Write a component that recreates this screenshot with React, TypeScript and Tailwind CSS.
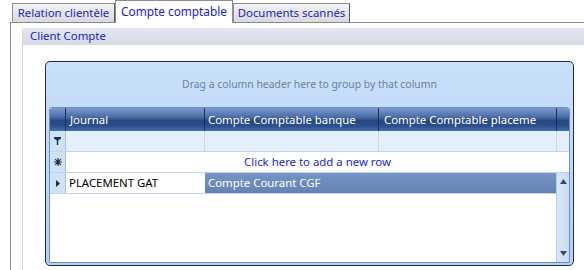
import React from 'react';

const Tab = ({ label, active, w }: { label: string; active?: boolean; w: string }) => (
  <div
    className={
      active
        ? `${w} h-[23px] -mb-px relative z-10 border border-b-0 border-[#8a8d94] bg-white text-[#1a1ad8] text-[11.8px] leading-[21px] text-center`
        : `${w} h-[19px] border border-b-0 border-l-[#8a8d94] border-t-[#8a8d94] border-r-[#55585f] bg-gradient-to-b from-[#f4f4f4] to-[#d9d9d9] text-[#1a1ad8] text-[11.4px] leading-[18px] text-center`
    }
  >
    {label}
  </div>
);

const FilterIcon = () => (
  <svg width="7" height="8" viewBox="0 0 7 8">
    <path d="M0 0h7v1.5L4.2 3.5V8H2.8V3.5L0 1.5z" fill="#1b2c4c" />
  </svg>
);

const StarIcon = () => (
  <svg width="8" height="8" viewBox="0 0 8 8">
    <path d="M4 0v8M0 4h8M1.2 1.2l5.6 5.6M6.8 1.2l-5.6 5.6" stroke="#1b2c4c" strokeWidth="1.2" />
  </svg>
);

const ArrowIcon = () => (
  <svg width="4" height="7" viewBox="0 0 4 7">
    <path d="M0 0l4 3.5L0 7z" fill="#1b2c4c" />
  </svg>
);

export default function App() {
  return (
    <div className="w-[584px] h-[270px] overflow-hidden bg-white font-['Noto_Sans',sans-serif] flex flex-col">
      {/* tab strip */}
      <div className="flex items-end h-[22px] pl-[12px] shrink-0">
        <Tab label="Relation clientèle" w="w-[103px]" />
        <Tab label="Compte comptable" w="w-[118px]" active />
        <Tab label="Documents scannés" w="w-[117px]" />
      </div>

      {/* tab panel */}
      <div className="ml-[10px] flex-1 border-l border-t border-[#8a8d94] pl-[11px] pt-[5px] flex flex-col">
        <div className="flex-1 flex flex-col border-l border-[#d4d6da]">
          <div className="h-[17px] rounded-tl-[3px] bg-gradient-to-b from-[#e4e7ee] to-[#d7dbe5] border-b border-[#cfd3dc] text-[#1a1ad8] text-[11.4px] leading-[16px] pl-[7px] shrink-0">
            Client Compte
          </div>

          {/* grid */}
          <div className="ml-[22px] mt-[16px] w-[529px] h-[205px] rounded-[5px] border border-[#1c2c4a] bg-gradient-to-b from-[#c9e0fb] to-[#b3cff2] flex flex-col px-[3px] pb-[2px]">
            <div className="h-[45px] shrink-0 flex items-center justify-center text-[10.4px] text-[#6b7f9e]">
              Drag a column header here to group by that column
            </div>

            <div className="flex-1 flex flex-col border border-[#6f8fc4] rounded-t-[3px] bg-white overflow-hidden">
              {/* header */}
              <div className="h-[23px] shrink-0 flex bg-[linear-gradient(to_bottom,#7b9bcc_0%,#4a6ca6_40%,#27477f_55%,#2d5190_80%,#4471ad_100%)] text-white text-[11.4px] leading-[23px]">
                <div className="w-[16px] border-r border-[#1a3160]" />
                <div className="w-[139px] border-r border-[#1a3160] pl-[4px]">Journal</div>
                <div className="w-[174px] border-r border-[#1a3160] pl-[3px]">Compte Comptable banque</div>
                <div className="w-[178px] border-r border-[#1a3160] pl-[5px] whitespace-nowrap overflow-hidden">Compte Comptable placeme</div>
                <div className="flex-1" />
              </div>

              {/* filter row */}
              <div className="h-[21px] shrink-0 flex bg-[#e4effc] border-b border-[#c2d4ec]">
                <div className="w-[16px] bg-[#cfe1f6] border-r border-[#a9c2e2] flex items-center justify-center">
                  <FilterIcon />
                </div>
                <div className="w-[139px] border-r border-[#c7d8ee]" />
                <div className="w-[174px] border-r border-[#c7d8ee]" />
                <div className="w-[178px] border-r border-[#c7d8ee]" />
                <div className="flex-1" />
              </div>

              {/* new row */}
              <div className="h-[21px] shrink-0 flex border-b border-[#c2d4ec]">
                <div className="w-[16px] bg-[#cfe1f6] border-r border-[#a9c2e2] flex items-center justify-center">
                  <StarIcon />
                </div>
                <div className="flex-1 text-center text-[11.4px] leading-[20px] text-[#1a1ae0]">
                  Click here to add a new row
                </div>
              </div>

              {/* data + scrollbar */}
              <div className="flex-1 flex">
                <div className="flex-1 flex flex-col">
                  <div className="h-[21px] flex border-b border-[#c2d4ec]">
                    <div className="w-[16px] bg-[#cfe1f6] border-r border-[#a9c2e2] flex items-center justify-center">
                      <ArrowIcon />
                    </div>
                    <div className="w-[139px] pl-[3px] text-[11.4px] leading-[20px] text-black">PLACEMENT GAT</div>
                    <div className="flex-1 pl-[3px] bg-gradient-to-b from-[#7594c4] to-[#6483b5] text-white text-[11.4px] leading-[20px]">
                      Compte Courant CGF
                    </div>
                  </div>
                </div>
                <div className="w-[13px] bg-gradient-to-r from-[#d9e7f6] to-[#c9dbf0] border-l border-[#b6cbe6] flex flex-col items-center justify-between py-[6px]">
                  <svg width="7" height="5" viewBox="0 0 7 5">
                    <path d="M3.5 0L7 5H0z" fill="#284a82" />
                  </svg>
                  <svg width="7" height="5" viewBox="0 0 7 5">
                    <path d="M0 0h7L3.5 5z" fill="#284a82" />
                  </svg>
                </div>
              </div>
            </div>
          </div>
        </div>
      </div>
    </div>
  );
}
